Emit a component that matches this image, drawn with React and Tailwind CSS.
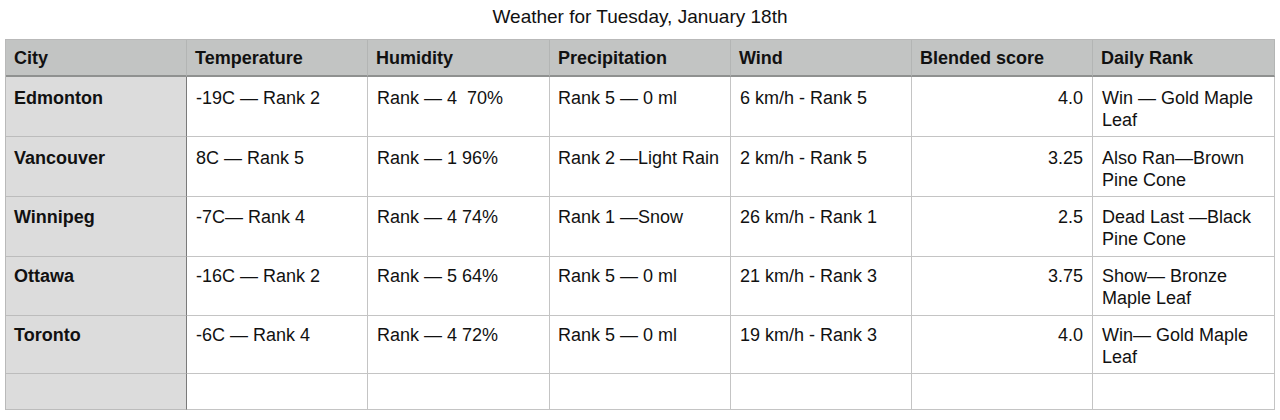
import React from "react";

const cols = "grid grid-cols-[181px_181px_182px_181px_181px_181px_182px]";

const rows = [
  { h: "h-[60px] pt-[10px]", city: "Edmonton", temp: "-19C — Rank 2", hum: "Rank — 4  70%", pre: "Rank 5 — 0 ml", wind: "6 km/h - Rank 5", score: "4.0", rank: "Win — Gold Maple Leaf" },
  { h: "h-[60px] pt-[10px]", city: "Vancouver", temp: "8C — Rank 5", hum: "Rank — 1 96%", pre: "Rank 2 —Light Rain", wind: "2 km/h - Rank 5", score: "3.25", rank: "Also Ran—Brown Pine Cone" },
  { h: "h-[60px] pt-[9px]", city: "Winnipeg", temp: "-7C— Rank 4", hum: "Rank — 4 74%", pre: "Rank 1 —Snow", wind: "26 km/h - Rank 1", score: "2.5", rank: "Dead Last —Black Pine Cone" },
  { h: "h-[59px] pt-[8px]", city: "Ottawa", temp: "-16C — Rank 2", hum: "Rank — 5 64%", pre: "Rank 5 — 0 ml", wind: "21 km/h - Rank 3", score: "3.75", rank: "Show— Bronze Maple Leaf" },
  { h: "h-[58px] pt-[8px]", city: "Toronto", temp: "-6C — Rank 4", hum: "Rank — 4 72%", pre: "Rank 5 — 0 ml", wind: "19 km/h - Rank 3", score: "4.0", rank: "Win— Gold Maple Leaf" },
];

const headers = ["City", "Temperature", "Humidity", "Precipitation", "Wind", "Blended score", "Daily Rank"];

export default function App() {
  return (
    <div
      className="w-[1280px] h-[420px] bg-white text-[#111] overflow-hidden"
      style={{ fontFamily: '"Liberation Sans", Arial, sans-serif' }}
    >
      <div className="h-[39px] pt-[5px] text-center text-[19px] leading-[24px]">
        Weather for Tuesday, January 18th
      </div>
      <div className="ml-[5px] w-[1270px] border-l border-t border-[#b9b9b9]">
        <div className={`${cols} bg-[#c2c4c3]`}>
          {headers.map((h) => (
            <div
              key={h}
              className="h-[37px] border-r border-b-2 border-r-[#b3b5b4] border-b-[#8f9190] px-[8px] pt-[7px] text-[18px] leading-[22px] font-bold whitespace-nowrap"
            >
              {h}
            </div>
          ))}
        </div>
        {rows.map((r) => (
          <div key={r.city} className={cols}>
            <div className={`${r.h} bg-[#dcdcdc] border-r border-b border-r-[#7a7a7a] border-b-[#bcbcbc] px-[8px] text-[18px] leading-[22px] font-bold`}>
              {r.city}
            </div>
            <div className={`${r.h} border-r border-b border-[#c4c4c4] px-[9px] text-[18px] leading-[22px] whitespace-nowrap`}>{r.temp}</div>
            <div className={`${r.h} border-r border-b border-[#c4c4c4] px-[9px] text-[18px] leading-[22px] whitespace-pre`}>{r.hum}</div>
            <div className={`${r.h} border-r border-b border-[#c4c4c4] px-[8px] text-[18px] leading-[22px] whitespace-nowrap`}>{r.pre}</div>
            <div className={`${r.h} border-r border-b border-[#c4c4c4] px-[9px] text-[18px] leading-[22px] whitespace-nowrap`}>{r.wind}</div>
            <div className={`${r.h} border-r border-b border-[#c4c4c4] px-[9px] text-[18px] leading-[22px] text-right whitespace-nowrap`}>{r.score}</div>
            <div className={`${r.h} border-r border-b border-[#c4c4c4] px-[9px] text-[18px] leading-[22px]`}>{r.rank}</div>
          </div>
        ))}
        <div className={cols}>
          <div className="h-[36px] bg-[#dcdcdc] border-r border-b border-r-[#7a7a7a] border-b-[#bcbcbc]" />
          <div className="h-[36px] border-r border-b border-[#c4c4c4]" />
          <div className="h-[36px] border-r border-b border-[#c4c4c4]" />
          <div className="h-[36px] border-r border-b border-[#c4c4c4]" />
          <div className="h-[36px] border-r border-b border-[#c4c4c4]" />
          <div className="h-[36px] border-r border-b border-[#c4c4c4]" />
          <div className="h-[36px] border-r border-b border-[#c4c4c4]" />
        </div>
      </div>
    </div>
  );
}
